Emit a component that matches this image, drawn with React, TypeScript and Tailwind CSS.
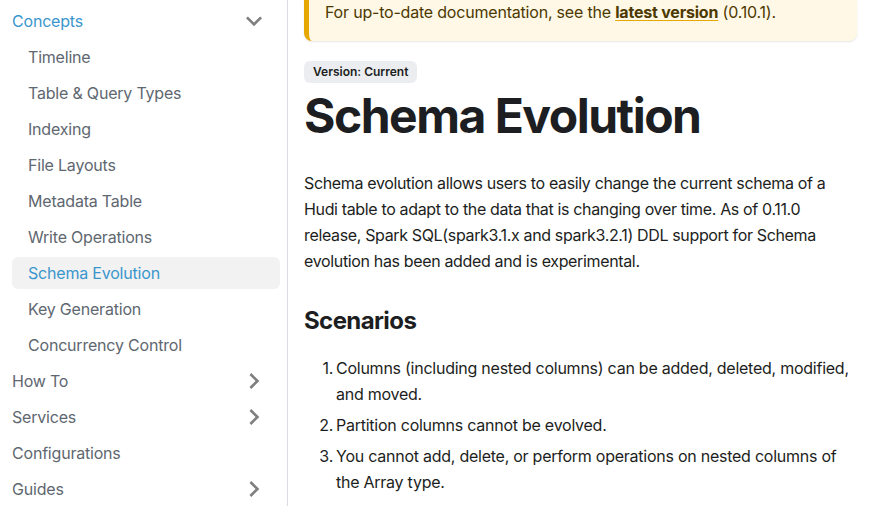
import { ReactNode } from 'react';

const font = { fontFamily: 'Inter, "Noto Sans", sans-serif' };

function Caret({ open }: { open?: boolean }) {
  return (
    <svg
      viewBox="0 0 24 24"
      className={`w-8 h-8 shrink-0 ${open ? 'rotate-180' : 'rotate-90'}`}
    >
      <path d="M7.41 15.41L12 10.83l4.59 4.58L18 14l-6-6-6 6z" fill="rgba(0,0,0,0.5)" />
    </svg>
  );
}

function TopItem({ label, caret, open, active }: { label: string; caret?: boolean; open?: boolean; active?: boolean }) {
  return (
    <div className="mt-1 h-8 flex items-center justify-between pl-3 pr-[10px]">
      <span className={`text-base leading-5 tracking-[-0.2px] ${active ? 'text-[#3a96cd]' : 'text-[#606770]'}`}>
        {label}
      </span>
      {caret && <Caret open={open} />}
    </div>
  );
}

function SubItem({ label, active }: { label: string; active?: boolean }) {
  return (
    <div
      className={`mt-1 ml-3 h-8 flex items-center px-4 rounded-md ${
        active ? 'bg-[#f2f2f2] text-[#3a96cd]' : 'text-[#606770]'
      }`}
    >
      <span className="text-base leading-5 tracking-[-0.2px]">{label}</span>
    </div>
  );
}

const concepts = [
  'Timeline',
  'Table & Query Types',
  'Indexing',
  'File Layouts',
  'Metadata Table',
  'Write Operations',
  'Schema Evolution',
  'Key Generation',
  'Concurrency Control',
];

function ListItem({ n, children }: { n: number; children: ReactNode }) {
  return (
    <li className={`flex ${n === 1 ? '' : 'mt-[5px]'}`}>
      <span className="w-[29px] shrink-0 text-right">{n}.</span>
      <span className="pl-[3px]">{children}</span>
    </li>
  );
}

export default function App() {
  return (
    <div className="flex h-[506px] w-[879px] overflow-hidden bg-white" style={font}>
      {/* sidebar */}
      <aside className="w-[288px] shrink-0 border-r border-[#dadde1] pt-[1px] pr-[7px]">
        <TopItem label="Concepts" caret open active />
        {concepts.map((c) => (
          <SubItem key={c} label={c} active={c === 'Schema Evolution'} />
        ))}
        <TopItem label="How To" caret />
        <TopItem label="Services" caret />
        <TopItem label="Configurations" />
        <TopItem label="Guides" caret />
      </aside>

      {/* content */}
      <main className="flex-1 pl-4 pr-[22px] text-[#1c1e21]">
        <div className="border-l-[5px] border-[#e6a700] bg-[#fff8e6] rounded-b-lg shadow-[0_1px_2px_rgba(0,0,0,0.1)] pl-4 pr-4 pb-[17px] text-[#4d3800]">
          <p className="text-base leading-6 tracking-[-0.2px]">
            For up-to-date documentation, see the{' '}
            <a className="font-bold underline decoration-[#e6a700] underline-offset-2">latest version</a> (0.10.1).
          </p>
        </div>

        <span className="inline-block mt-5 h-[22px] px-[9px] rounded-md bg-[#ebedf0] text-xs leading-[22px] font-semibold">
          Version: Current
        </span>

        <h1 className="mt-[3px] text-[48px] leading-[60px] font-bold tracking-[-1.5px]">Schema Evolution</h1>

        <p className="mt-[24px] text-base leading-[26px] tracking-[-0.35px]">
          Schema evolution allows users to easily change the current schema of a Hudi table to adapt to the data
          that is changing over time. As of 0.11.0 release, Spark SQL(spark3.1.x and spark3.2.1) DDL support for
          Schema evolution has been added and is experimental.
        </p>

        <h2 className="mt-[32px] text-2xl leading-[30px] font-bold tracking-[-0.6px]">Scenarios</h2>

        <ol className="mt-[19px] text-base leading-[26px] tracking-[-0.25px]">
          <ListItem n={1}>Columns (including nested columns) can be added, deleted, modified, and moved.</ListItem>
          <ListItem n={2}>Partition columns cannot be evolved.</ListItem>
          <ListItem n={3}>You cannot add, delete, or perform operations on nested columns of the Array type.</ListItem>
        </ol>
      </main>
    </div>
  );
}
